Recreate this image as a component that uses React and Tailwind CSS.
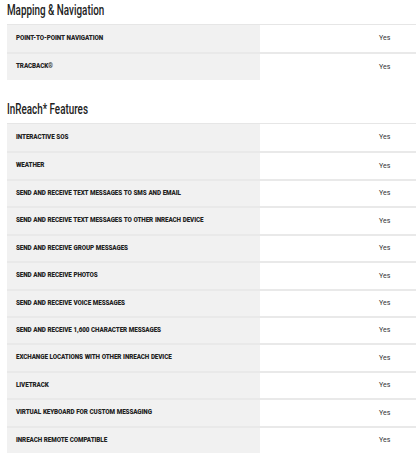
import React from "react";

const sections = [
  {
    title: "Mapping & Navigation",
    rows: ["POINT-TO-POINT NAVIGATION", "TRACBACK®"],
  },
  {
    title: "InReach* Features",
    rows: [
      "INTERACTIVE SOS",
      "WEATHER",
      "SEND AND RECEIVE TEXT MESSAGES TO SMS AND EMAIL",
      "SEND AND RECEIVE TEXT MESSAGES TO OTHER INREACH DEVICE",
      "SEND AND RECEIVE GROUP MESSAGES",
      "SEND AND RECEIVE PHOTOS",
      "SEND AND RECEIVE VOICE MESSAGES",
      "SEND AND RECEIVE 1,600 CHARACTER MESSAGES",
      "EXCHANGE LOCATIONS WITH OTHER INREACH DEVICE",
      "LIVETRACK",
      "VIRTUAL KEYBOARD FOR CUSTOM MESSAGING",
      "INREACH REMOTE COMPATIBLE",
    ],
  },
];

export default function App() {
  return (
    <div className="w-[416px] h-[455px] overflow-hidden bg-white pl-[7px]">
      {sections.map((s, i) => (
        <div key={i} className={i === 0 ? "pt-[3px]" : "pt-[22px]"}>
          <div className="h-[21px] flex items-start">
            <h2 className="block w-max origin-left scale-x-[0.68] whitespace-nowrap text-[14.5px] leading-[16px] text-[#222] font-medium font-['Roboto',sans-serif]">
              {s.title}
            </h2>
          </div>
          <div className="border-t border-[#e6e6e6]">
            {s.rows.map((r, j) => (
              <div
                key={j}
                className={`flex h-[27.45px] ${j > 0 ? "border-t-2 border-[#e9e9e9]" : ""}`}
              >
                <div className="w-[253px] bg-[#f1f1f1] flex items-center pl-[9px] text-[6.3px] font-black text-[#222] font-['Roboto',sans-serif] tracking-[-0.1px] [word-spacing:0.3px]">
                  {r}
                </div>
                <div className="flex-1 flex items-center pl-[119px] text-[7px] text-[#333] font-['Roboto',sans-serif]">
                  Yes
                </div>
              </div>
            ))}
          </div>
        </div>
      ))}
    </div>
  );
}
